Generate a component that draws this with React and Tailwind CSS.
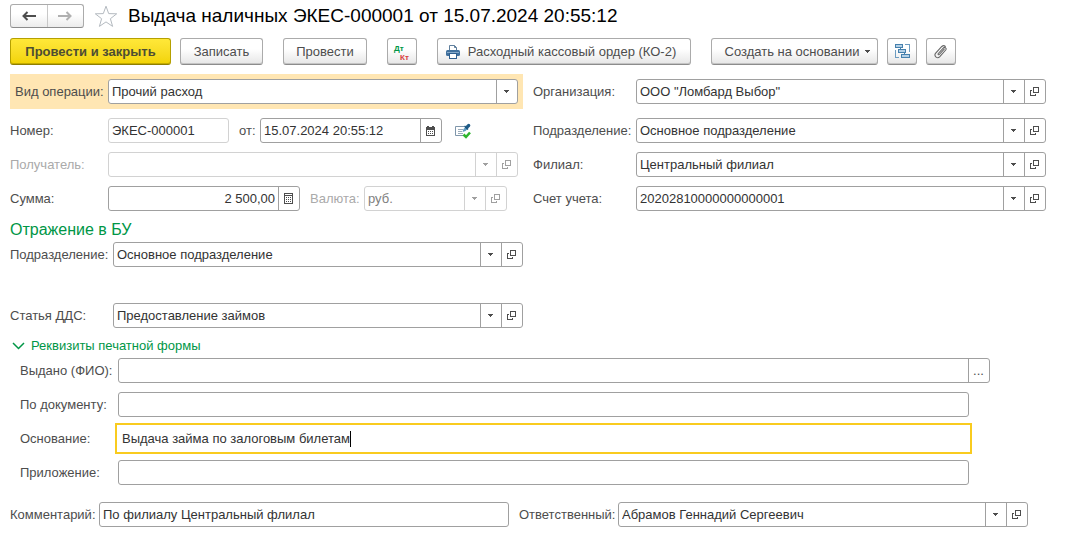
import React from 'react';
import clsx from 'clsx';

const DropArrow = () => (
  <svg width="5" height="3" viewBox="0 0 5 3" fill="currentColor" shapeRendering="crispEdges">
    <path d="M0 0h5v1H0zM1 1h3v1H1zM2 2h1v1H2z" />
  </svg>
);

const OpenIcon = () => (
  <svg width="10" height="10" viewBox="0 0 10 10" fill="none" stroke="currentColor" shapeRendering="crispEdges">
    <path d="M3.5 0.5h5v5h-5z" />
    <path d="M2 3.5H0.5v5h5V7" />
  </svg>
);

const CalendarIcon = () => (
  <svg width="9" height="10" viewBox="0 0 9 10" fill="currentColor" shapeRendering="crispEdges">
    <path d="M1 0h2v1H1zM6 0h2v1H6zM0 1h9v3H0zM0 4h1v6H0zM8 4h1v6H8zM1 9h7v1H1z" />
    <path d="M2 5h1v1H2zM4 5h1v1H4zM6 5h1v1H6zM2 7h1v1H2zM4 7h1v1H4zM6 7h1v1H6z" />
  </svg>
);

const CalculatorIcon = () => (
  <svg width="9" height="11" viewBox="0 0 9 11" fill="currentColor" shapeRendering="crispEdges">
    <path d="M0 0h9v1H0zM0 1h1v10H0zM8 1h1v10H8zM1 10h7v1H1zM1 2h7v1H1z" />
    <path d="M2 4h1v1H2zM4 4h1v1H4zM6 4h1v1H6zM2 6h1v1H2zM4 6h1v1H4zM6 6h1v1H6zM2 8h1v1H2zM4 8h1v1H4zM6 8h1v1H6z" />
  </svg>
);

const ArrowIcon = ({ className }) => (
  <svg className={className} width="14" height="10" viewBox="0 0 14 10" fill="none" stroke="currentColor">
    <path d="M2 5h12" strokeWidth="2" />
    <path d="M5.5 1L1.5 5l4 4" strokeWidth="2" />
  </svg>
);

const StarIcon = () => (
  <svg width="24" height="23" viewBox="0 0 24 23" fill="#fff" stroke="#b4bac0" strokeWidth="1">
    <path d="M12 1.2l2.7 7.4 8 .2-6.3 4.9 2.2 7.7-6.6-4.5-6.6 4.5 2.2-7.7-6.3-4.9 8-.2z" />
  </svg>
);

const PrinterIcon = () => (
  <svg width="14" height="14" viewBox="0 0 14 14" fill="none">
    <path d="M3.5 5V0.5h5L10.5 2.5V5" fill="#fff" stroke="#5f7f9d" />
    <path d="M8.5 0.5v2h2" stroke="#5f7f9d" />
    <rect x="0" y="5" width="14" height="6" rx="1.5" fill="#41719e" />
    <path d="M1 7.5h12" stroke="#86a9c9" />
    <rect x="3.5" y="8.5" width="7" height="5" fill="#fff" stroke="#2f5f8f" />
  </svg>
);

const StructureIcon = () => (
  <svg width="15" height="15" viewBox="0 0 15 15" fill="#b4d0e6" stroke="#4580ad" shapeRendering="crispEdges">
    <path d="M0.5 0.5h7v3h-7zM3.5 5.5h7v3h-7zM6.5 10.5h8v3h-8z" />
    <path d="M5.5 4v1M9.5 9v1" fill="none" />
    <path d="M10 0.5h4.5V8M0.5 6v7.5H4" fill="none" stroke="#6d9cc0" />
  </svg>
);

const ClipIcon = () => (
  <svg width="14" height="14" viewBox="0 0 14 14" fill="none" stroke="#666" strokeWidth="1.1" strokeLinecap="round">
    <path d="M10.2 4.2L5.3 9.5c-.6.7-1.7-.2-1-1L9.4 3c1.5-1.5 3.6.3 2.3 2L5.6 11.8C3.5 14-.4 11.5 1.5 8.3L7.8 1.5c1.2-1.1 2.7-.9 3.5-.1" />
  </svg>
);

const NoteIcon = () => (
  <svg width="16" height="16" viewBox="0 0 16 16" fill="none">
    <path d="M9 3.5H0.5v9H9" stroke="#7f96ab" />
    <path d="M3 6.5h5M3 8.5h4M3 10.5h5" stroke="#9aabba" />
    <path d="M7.5 9l1-3 3-3 2 2-3 3z" fill="#5d9ac0" />
    <path d="M9.5 3l3.500 3.500" stroke="#174f78" strokeWidth="1.5" />
    <path d="M12 4.200l1.700-1.700" stroke="#1d5a86" strokeWidth="3.2" strokeLinecap="round" />
    <path d="M8.500 11.500l2.500 2.500 4-4.500" stroke="#2fb52f" strokeWidth="2.500" />
  </svg>
);

const PostingsIcon = () => (
  <svg
    width="18"
    height="20"
    viewBox="0 0 18 20"
    fontFamily="Liberation Sans, Arial, sans-serif"
    fontWeight="700"
    fontSize="8"
  >
    <text x="1" y="9" fill="#009646">
      Дт
    </text>
    <text x="7" y="18" fill="#d9403c">
      Кт
    </text>
  </svg>
);

const CELL = 'flex w-[21px] shrink-0 items-center justify-center border-l pr-px';

// Bordered box shared by every field on the form
const Box = ({ disabled, className, children }) => (
  <div
    className={clsx(
      'flex h-[25px] min-w-0 rounded-[3px] border bg-white',
      disabled ? 'border-[#d2d2d2] text-[#a0a0a0]' : 'border-[#a0a0a0] text-[#4d4d4d]',
      className
    )}
  >
    {children}
  </div>
);

const Combo = ({ id, value, disabled, open = true, className = 'flex-1' }) => {
  const line = disabled ? 'border-[#d2d2d2]' : 'border-[#a0a0a0]';
  return (
    <Box disabled={disabled} className={className}>
      <div className="relative flex min-w-0 flex-1">
        <select
          id={id}
          disabled={disabled}
          className={clsx(
            'w-full appearance-none bg-transparent pr-6 pl-[3px] opacity-100 outline-none',
            disabled ? 'text-[#808080]' : 'text-[#333]'
          )}
        >
          <option>{value}</option>
        </select>
        <span className={clsx(CELL, line, 'pointer-events-none absolute inset-y-0 right-0')}>
          <DropArrow />
        </span>
      </div>
      {open && (
        <button type="button" disabled={disabled} aria-label="Открыть" className={clsx(CELL, line)}>
          <OpenIcon />
        </button>
      )}
    </Box>
  );
};

const Text = ({ id, value, inputClass, className = 'flex-1', children, ...rest }) => (
  <Box className={className}>
    <input
      id={id}
      defaultValue={value}
      className={clsx('w-full min-w-0 flex-1 bg-transparent px-[3px] text-[#333] outline-none', inputClass)}
      {...rest}
    />
    {children}
  </Box>
);

const Label = ({ htmlFor, width, disabled, children }) => (
  <label
    htmlFor={htmlFor}
    className={clsx('shrink-0 whitespace-nowrap', width, disabled ? 'text-[#aaa]' : 'text-[#4d4d4d]')}
  >
    {children}
  </label>
);

const Row = ({ className, children }) => <div className={clsx('flex items-center', className)}>{children}</div>;

const BarButton = ({ className, children, ...rest }) => (
  <button
    type="button"
    className={clsx(
      'flex h-[27px] shrink-0 items-center justify-center rounded-[3px] border border-[#ababab] border-b-[#8c8c8c] bg-linear-to-b from-white from-40% to-[#e6e6e6] whitespace-nowrap text-[#4d4d4d] shadow-[inset_0_-1px_0_#c4c4c4]',
      className
    )}
    {...rest}
  >
    {children}
  </button>
);

const App = () => {
  return (
    <main className="min-h-screen bg-white pt-1 pl-[10px] font-['Liberation_Sans',Arial,sans-serif] text-[13px] leading-4">
      <header className="flex items-center">
        <div className="flex h-6 w-[74px] rounded-[3px] border border-[#ababab] border-b-[#8c8c8c] bg-linear-to-b from-white from-40% to-[#ececec]">
          <button type="button" aria-label="Назад" className="flex flex-1 items-center justify-center text-[#4d4d4d]">
            <ArrowIcon />
          </button>
          <button
            type="button"
            aria-label="Вперед"
            className="flex flex-1 items-center justify-center border-l border-[#c8c8c8] text-[#b0b0b0]"
          >
            <ArrowIcon className="rotate-180" />
          </button>
        </div>
        <button type="button" aria-label="Избранное" className="ml-[10px]">
          <StarIcon />
        </button>
        <h1 className="ml-[10px] text-[19px] leading-6 whitespace-nowrap text-black">
          Выдача наличных ЭКЕС-000001 от 15.07.2024 20:55:12
        </h1>
      </header>

      <div className="mt-[10px] flex gap-5">
        <div className="flex gap-[9px]">
          <button
            type="button"
            className="flex h-[27px] w-[161px] items-center justify-center rounded-[3px] border border-[#b5a000] border-b-[#8f7f00] bg-linear-to-b from-[#ffe838] to-[#f2d300] font-bold whitespace-nowrap text-[#4d4d33] shadow-[inset_0_-1px_0_#c4ab00]"
          >
            Провести и закрыть
          </button>
          <BarButton className="w-[83px]">Записать</BarButton>
        </div>
        <BarButton className="w-[84px]">Провести</BarButton>
        <BarButton className="w-[30px]" aria-label="Проводки">
          <PostingsIcon />
        </BarButton>
        <BarButton className="w-[254px] gap-2 pr-[6px]">
          <PrinterIcon />
          Расходный кассовый ордер (КО-2)
        </BarButton>
        <div className="flex gap-[9px]">
          <BarButton className="w-[167px] gap-[6px] pl-[6px]">
            Создать на основании
            <DropArrow />
          </BarButton>
          <BarButton className="w-[30px]" aria-label="Структура подчиненности">
            <StructureIcon />
          </BarButton>
          <BarButton className="w-[30px]" aria-label="Файлы">
            <ClipIcon />
          </BarButton>
        </div>
      </div>

      <form>
        <div className="mt-[9px] grid grid-cols-2 gap-[10px] pr-[22px]">
          <div className="flex flex-col gap-[9px]">
            <Row className="bg-[#ffe6b3] p-[5px]">
              <Label htmlFor="operation" width="w-[93px]">
                Вид операции:
              </Label>
              <Combo id="operation" value="Прочий расход" open={false} />
            </Row>
            <Row>
              <Label htmlFor="number" width="w-[98px]">
                Номер:
              </Label>
              <Box disabled className="w-[121px]">
                <input
                  id="number"
                  readOnly
                  defaultValue="ЭКЕС-000001"
                  className="w-full bg-transparent px-[3px] text-[#333] outline-none"
                />
              </Box>
              <span className="ml-[10px] flex w-[21px]">
                <Label htmlFor="date">от:</Label>
              </span>
              <Text id="date" value="15.07.2024 20:55:12" className="w-[182px]">
                <button type="button" aria-label="Выбрать дату" className={clsx(CELL, 'border-[#a0a0a0]')}>
                  <CalendarIcon />
                </button>
              </Text>
              <button type="button" aria-label="Статус документа" className="ml-[13px]">
                <NoteIcon />
              </button>
            </Row>
            <Row className="pr-[5px]">
              <Label htmlFor="recipient" width="w-[98px]" disabled>
                Получатель:
              </Label>
              <Combo id="recipient" value="" disabled />
            </Row>
            <Row>
              <Label htmlFor="amount" width="w-[98px]">
                Сумма:
              </Label>
              <Text id="amount" value="2 500,00" inputClass="text-right" className="w-[192px]">
                <button type="button" aria-label="Калькулятор" className={clsx(CELL, 'border-[#a0a0a0]')}>
                  <CalculatorIcon />
                </button>
              </Text>
              <span className="ml-[10px] flex w-[54px]">
                <Label htmlFor="currency" disabled>
                  Валюта:
                </Label>
              </span>
              <Combo id="currency" value="руб." disabled className="w-[143px]" />
            </Row>
          </div>

          <div className="flex flex-col gap-[9px] pt-[5px]">
            <Row className="mb-[5px]">
              <Label htmlFor="company" width="w-[103px]">
                Организация:
              </Label>
              <Combo id="company" value={'ООО "Ломбард Выбор"'} />
            </Row>
            <Row>
              <Label htmlFor="department" width="w-[103px]">
                Подразделение:
              </Label>
              <Combo id="department" value="Основное подразделение" />
            </Row>
            <Row>
              <Label htmlFor="branch" width="w-[103px]">
                Филиал:
              </Label>
              <Combo id="branch" value="Центральный филиал" />
            </Row>
            <Row>
              <Label htmlFor="account" width="w-[103px]">
                Счет учета:
              </Label>
              <Combo id="account" value="20202810000000000001" />
            </Row>
          </div>

          <section className="-mt-[3px]">
            <h2 className="text-base leading-6 text-[#009646]">Отражение в БУ</h2>
            <Row>
              <Label htmlFor="bu-department" width="w-[103px]">
                Подразделение:
              </Label>
              <Combo id="bu-department" value="Основное подразделение" />
            </Row>
            <Row className="mt-9">
              <Label htmlFor="cashflow" width="w-[103px]">
                Статья ДДС:
              </Label>
              <Combo id="cashflow" value="Предоставление займов" />
            </Row>
          </section>
        </div>

        <section className="pr-[78px]">
          <button type="button" aria-expanded="true" className="mt-[5px] flex h-[25px] items-center text-[#009646]">
            <svg
              className="mr-[6px] ml-[2px]"
              width="13"
              height="8"
              viewBox="0 0 13 8"
              fill="none"
              stroke="currentColor"
              strokeWidth="1.5"
            >
              <path d="M1 1l5.5 5.5L12 1" />
            </svg>
            Реквизиты печатной формы
          </button>
          <div className="flex flex-col gap-[9px] pl-[10px]">
            <Row>
              <Label htmlFor="issued" width="w-[98px]">
                Выдано (ФИО):
              </Label>
              <Text id="issued">
                <button type="button" aria-label="Выбрать" className={clsx(CELL, 'border-[#a0a0a0]')}>
                  ...
                </button>
              </Text>
            </Row>
            <Row className="pr-[21px]">
              <Label htmlFor="by-document" width="w-[98px]">
                По документу:
              </Label>
              <Text id="by-document" />
            </Row>
            <Row className="pr-[21px]">
              <Label htmlFor="reason" width="w-[98px]">
                Основание:
              </Label>
              {/* active field: yellow frame and text cursor */}
              <div className="flex h-[25px] flex-1 items-center bg-white pl-1 text-[#333] outline-2 outline-offset-1 outline-[#f9cb1f]">
                <input
                  id="reason"
                  defaultValue="Выдача займа по залоговым билетам"
                  className="[field-sizing:content] bg-transparent caret-transparent outline-none"
                />
                <span className="h-4 w-px bg-black" />
              </div>
            </Row>
            <Row className="pr-[21px]">
              <Label htmlFor="attachment" width="w-[98px]">
                Приложение:
              </Label>
              <Text id="attachment" />
            </Row>
          </div>
        </section>

        <div className="mt-[17px] flex gap-[10px] pr-10">
          <Row className="flex-1 basis-[89px]">
            <Label htmlFor="comment" width="w-[89px]">
              Комментарий:
            </Label>
            <Text id="comment" value="По филиалу Центральный флилал" />
          </Row>
          <Row className="flex-1 basis-[99px]">
            <Label htmlFor="responsible" width="w-[99px]">
              Ответственный:
            </Label>
            <Combo id="responsible" value="Абрамов Геннадий Сергеевич" />
          </Row>
        </div>
      </form>
    </main>
  );
};

export default App;
